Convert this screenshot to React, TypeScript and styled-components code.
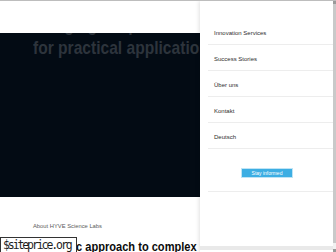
import styled, { createGlobalStyle } from "styled-components";

const GlobalStyle = createGlobalStyle`
  html, body {
    margin: 0;
    padding: 0;
    background: #ffffff;
    overflow: hidden;
  }

  body {
    font-family: "Liberation Sans", Arial, sans-serif;
  }
`;

const Page = styled.div`
  position: relative;
  width: 336px;
  height: 252px;
  overflow: hidden;
  border-top: 1px solid #bdbdbd;
  box-sizing: border-box;
  background: #ffffff;
`;

const TopBar = styled.header`
  height: 32px;
  background: #ffffff;
`;

const Hero = styled.section`
  height: 164px;
  background: #030b14;
  overflow: hidden;
  padding-left: 33px;
`;

// the site uses a condensed grotesk; squeeze Liberation Sans to its width
const HeroTitle = styled.h1`
  margin: -20px 0 0;
  font-size: 19px;
  line-height: 23px;
  font-weight: 700;
  color: #2d343c;
  white-space: nowrap;
  transform: scaleX(0.82);
  transform-origin: left top;
`;

const Intro = styled.section`
  padding: 25px 33px 0;
`;

const Eyebrow = styled.p`
  margin: 0;
  font-size: 5.8px;
  line-height: 8px;
  color: #5b5b5b;
`;

const Heading = styled.h2`
  margin: 9px 0 0;
  font-size: 13.5px;
  line-height: 15px;
  font-weight: 700;
  color: #0b0b0b;
  white-space: nowrap;
  transform: scaleX(0.82);
  transform-origin: left top;
`;

const MenuPanel = styled.aside`
  position: absolute;
  top: 0;
  right: 0;
  bottom: 0;
  width: 136px;
  display: flex;
  background: #ffffff;
  box-shadow: -1px 0 4px rgba(0, 0, 0, 0.12);
`;

const MenuBody = styled.div`
  flex: 1;
  display: flex;
  flex-direction: column;
`;

const MenuList = styled.nav`
  padding: 18px 0 0 8px;
  display: flex;
  flex-direction: column;
`;

const MenuItem = styled.a`
  display: block;
  padding: 11px 0 7px 6px;
  font-size: 6px;
  line-height: 7px;
  color: #2e2e2e;
  text-decoration: none;
  border-bottom: 1px solid #ededed;
`;

const ButtonRow = styled.div`
  padding: 20px 0 14px 34px;
  border-bottom: 1px solid #ededed;
  display: flex;
`;

const SubscribeButton = styled.button`
  width: 50px;
  height: 8px;
  padding: 0;
  border: 0;
  outline: 1px solid #bfe4f5;
  background: #3daee3;
  color: #ffffff;
  font-family: inherit;
  font-size: 5px;
  line-height: 8px;
`;

const HScroll = styled.div`
  margin-top: auto;
  height: 4px;
  margin-bottom: 2px;
  background: #e9e9e9;
`;

const VScroll = styled.div`
  width: 3px;
  display: flex;
  flex-direction: column;
  background: #f1f1f1;
`;

const ScrollArrow = styled.div`
  height: 3px;
  background: #9a9a9a;
`;

const ScrollThumb = styled.div`
  flex: 1;
  margin-bottom: 6px;
  background: #c9c9c9;
`;

const Watermark = styled.div`
  position: absolute;
  left: 0;
  bottom: -3px;
  width: 77px;
  height: 18px;
  box-sizing: border-box;
  border: 1px solid #333333;
  background: #ffffff;
  font-family: "DejaVu Sans Mono", "Liberation Mono", monospace;
  font-size: 11.5px;
  line-height: 14px;
  letter-spacing: -2.1px;
  padding-left: 2px;
  color: #1e1e1e;
  white-space: nowrap;
`;

const menu = ["Innovation Services", "Success Stories", "Über uns", "Kontakt", "Deutsch"];

export default function App() {
  return (
    <>
      <GlobalStyle />
      <Page>
        <TopBar />
        <Hero>
          <HeroTitle>
            Bringing deep research
            <br />
            for practical applications
          </HeroTitle>
        </Hero>
        <Intro>
          <Eyebrow>About HYVE Science Labs</Eyebrow>
          <Heading>Scientific approach to complex problems</Heading>
        </Intro>
        <MenuPanel>
          <MenuBody>
            <MenuList>
              {menu.map((label) => (
                <MenuItem key={label} href="#">
                  {label}
                </MenuItem>
              ))}
              <ButtonRow>
                <SubscribeButton>Stay informed</SubscribeButton>
              </ButtonRow>
            </MenuList>
            <HScroll />
          </MenuBody>
          <VScroll>
            <ScrollArrow />
            <ScrollThumb />
            <ScrollArrow />
          </VScroll>
        </MenuPanel>
        <Watermark>$siteprice.org</Watermark>
      </Page>
    </>
  );
}
